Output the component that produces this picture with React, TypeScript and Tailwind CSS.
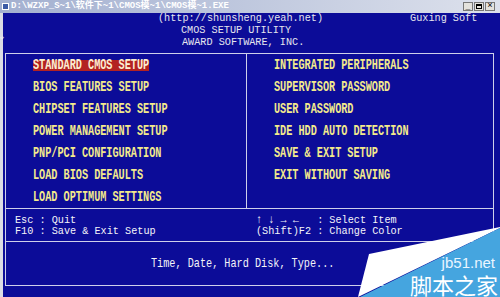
import React from 'react';

const leftItems = [
  'STANDARD CMOS SETUP',
  'BIOS FEATURES SETUP',
  'CHIPSET FEATURES SETUP',
  'POWER MANAGEMENT SETUP',
  'PNP/PCI CONFIGURATION',
  'LOAD BIOS DEFAULTS',
  'LOAD OPTIMUM SETTINGS',
];

const rightItems = [
  'INTEGRATED PERIPHERALS',
  'SUPERVISOR PASSWORD',
  'USER PASSWORD',
  'IDE HDD AUTO DETECTION',
  'SAVE & EXIT SETUP',
  'EXIT WITHOUT SAVING',
];

const MenuItem = ({ label, active }: { label: string; active?: boolean }) => (
  <div className="h-[22px] flex items-center">
    <span
      className={
        active
          ? 'inline-block bg-[#b32222] text-[#fbeed2] font-bold leading-[11px] h-[11px]'
          : 'inline-block text-[#f3ea8c] font-bold leading-[11px] h-[11px]'
      }
    >
      <span className="inline-block scale-y-[1.35]">{label}</span>
    </span>
  </div>
);

const App = () => {
  return (
    <div className="w-[500px] h-[297px] flex flex-col bg-[#d6d3cc] overflow-hidden font-['Liberation_Mono',monospace] relative select-none">
      {/* Title bar */}
      <div className="h-[13px] flex items-center bg-gradient-to-r from-[#a3b0d0] to-[#dde1ec] px-[2px]">
        <div className="w-[7px] h-[7px] bg-[#3b5aa6] border border-white mr-[2px]" />
        <span className="text-white font-bold text-[9px] leading-none font-['Liberation_Mono','Noto_Sans_CJK_SC',monospace]">
          D:\WZXP_S~1\软件下~1\CMOS模~1\CMOS模~1.EXE
        </span>
        <div className="ml-auto flex gap-[1px] mr-[3px]">
          <div className="w-[10px] h-[9px] bg-[#e4e2dc] border border-[#777] text-[8px] leading-[6px] text-black flex items-end justify-center">_</div>
          <div className="w-[10px] h-[9px] bg-[#e4e2dc] border border-[#777] flex items-center justify-center">
            <div className="w-[6px] h-[5px] border border-black border-t-2" />
          </div>
          <div className="w-[10px] h-[9px] bg-[#e4e2dc] border border-[#777] text-[9px] leading-[7px] text-black flex items-center justify-center">×</div>
        </div>
      </div>

      {/* Console body */}
      <div className="flex-1 flex min-h-0">
        <div className="w-[3px] bg-[#dcdce4] relative">
          <span className="absolute left-[0px] top-[22px] text-white text-[7px] leading-none">➩</span>
        </div>
        <div className="flex-1 bg-[#0c0c98] flex flex-col text-[10.2px]">
          {/* Header */}
          <div className="text-[#e6e6ee] leading-[12px]">
            <div className="h-[12px] flex">
              <span className="inline-block scale-y-[1.15] ml-[155px]">(http://shunsheng.yeah.net)</span>
              <span className="inline-block scale-y-[1.15] ml-[87px]">Guxing Soft</span>
            </div>
            <div className="h-[12px] pl-[178px]">
              <span className="inline-block scale-y-[1.15]">CMOS SETUP UTILITY</span>
            </div>
            <div className="h-[12px] pl-[179px]">
              <span className="inline-block scale-y-[1.15]">AWARD SOFTWARE, INC.</span>
            </div>
          </div>

          {/* Main box */}
          <div className="mt-[4px] ml-[2px] w-[489px] border border-[#cfd0ea] flex flex-col">
            <div className="flex h-[154px]">
              <div className="w-[240px] pl-[27px]">
                {leftItems.map((t, i) => (
                  <MenuItem key={t} label={t} active={i === 0} />
                ))}
              </div>
              <div className="w-px bg-[#cfd0ea]" />
              <div className="flex-1 pl-[27px]">
                {rightItems.map((t) => (
                  <MenuItem key={t} label={t} />
                ))}
              </div>
            </div>
            <div className="border-t border-[#cfd0ea] h-[33px] flex pt-[6px] text-[#f4f4f8] leading-[11px]">
              <div className="w-[241px] pl-[9px]">
                <div className="h-[11px]"><span className="inline-block scale-y-[1.12]">Esc : Quit</span></div>
                <div className="h-[11px]"><span className="inline-block scale-y-[1.12]">F10 : Save &amp; Exit Setup</span></div>
              </div>
              <div className="flex-1 pl-[9px] whitespace-pre">
                <div className="h-[11px]"><span className="inline-block scale-y-[1.12]">↑ ↓ → ←   : Select Item</span></div>
                <div className="h-[11px]"><span className="inline-block scale-y-[1.12]">(Shift)F2 : Change Color</span></div>
              </div>
            </div>
            <div className="border-t border-[#cfd0ea] h-[44px] flex items-center pl-[145px] text-[#f4f4f8]">
              <span className="inline-block scale-y-[1.25]">Time, Date, Hard Disk, Type...</span>
            </div>
          </div>
        </div>
      </div>

      {/* Watermark overlay */}
      <svg className="absolute right-0 bottom-0" width="145" height="75" viewBox="355 222 145 75">
        <polygon points="358,297 369,254 500,227 500,228" fill="#ffffff" />
        <polygon points="500,228 500,297 360,297" fill="#45a5df" />
      </svg>
      <div className="absolute right-[5px] bottom-[28px] text-[15px] leading-[13px] text-[#eaf5ff] font-['Liberation_Sans',sans-serif]">
        jb51.net
      </div>
      <div className="absolute right-[2px] bottom-[2px] text-[22px] leading-[22px] text-white font-['Noto_Sans_CJK_SC',sans-serif]">
        脚本之家
      </div>
    </div>
  );
};

export default App;
